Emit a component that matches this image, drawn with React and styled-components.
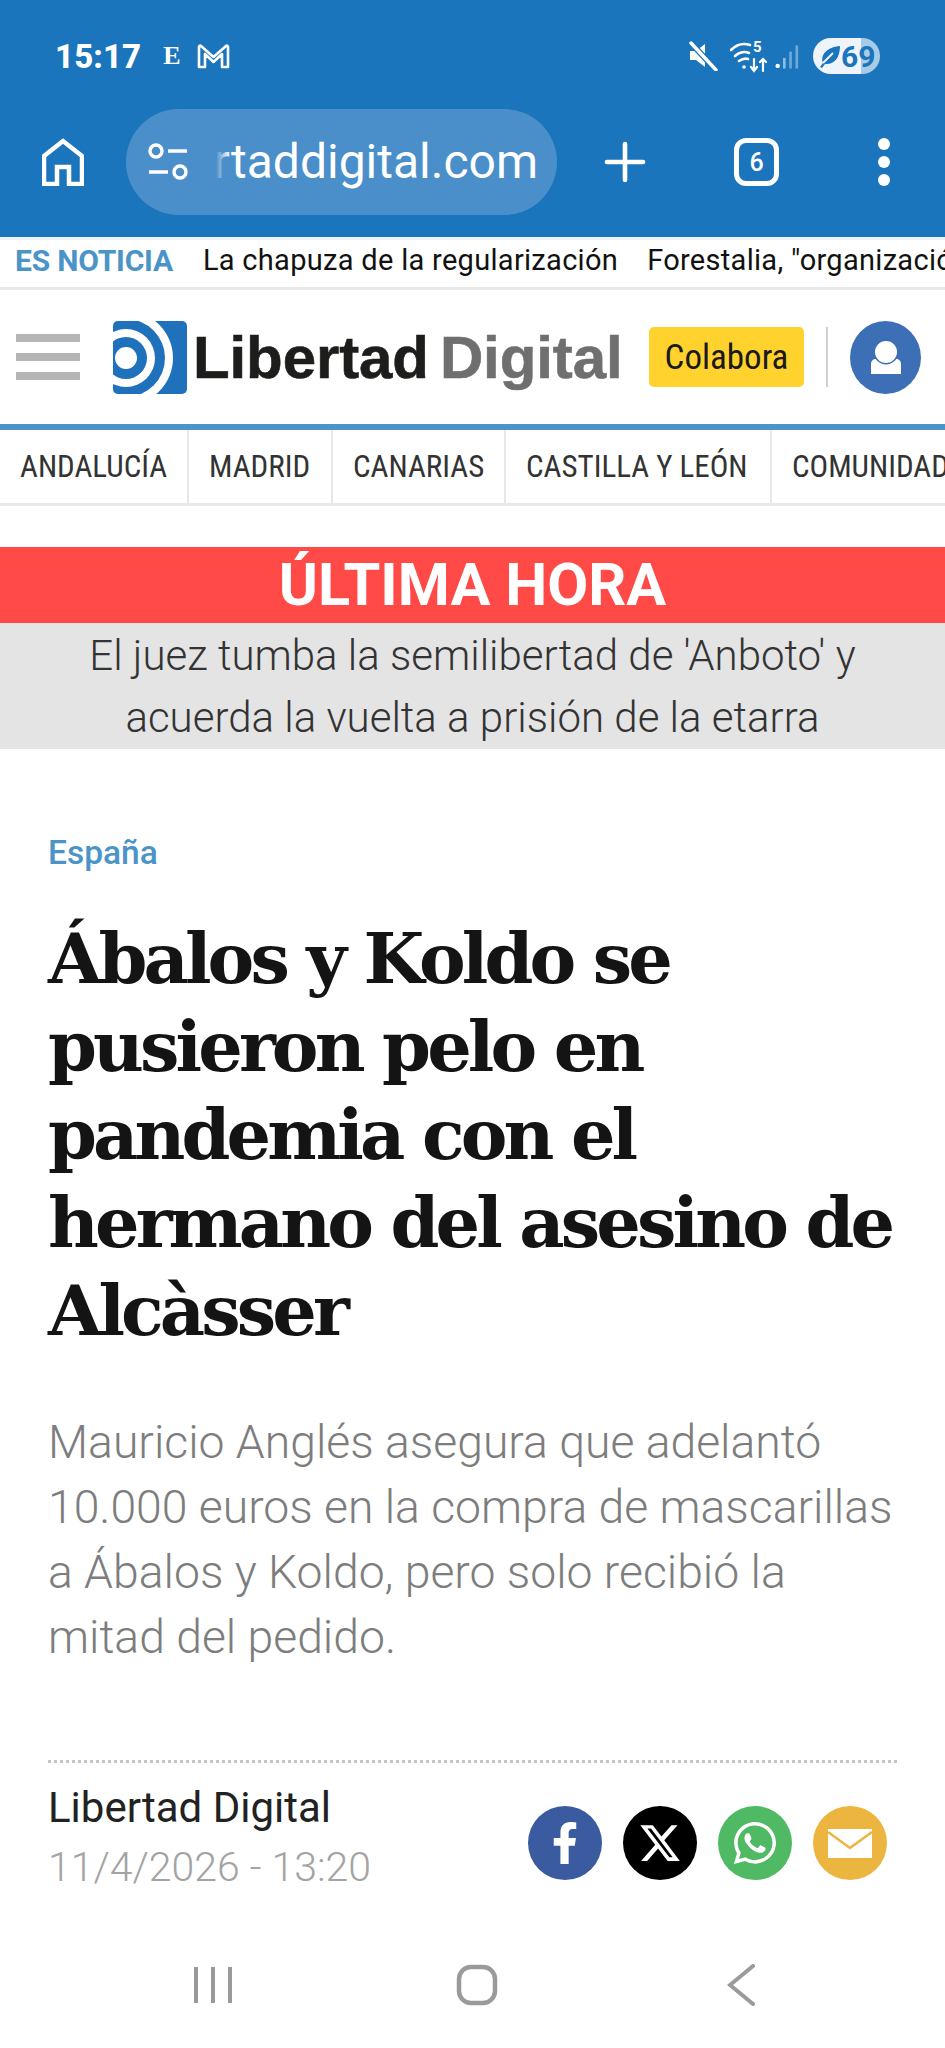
import React from 'react';
import styled, { createGlobalStyle } from 'styled-components';
import { FaFacebookF, FaWhatsapp } from 'react-icons/fa';
import { FaXTwitter } from 'react-icons/fa6';

const GlobalStyle = createGlobalStyle`
  html, body {
    margin: 0;
    padding: 0;
    background: #fff;
  }
  * {
    box-sizing: border-box;
  }
`;

const Page = styled.div`
  width: 945px;
  height: 2048px;
  overflow: hidden;
  display: flex;
  flex-direction: column;
  font-family: Roboto, 'Liberation Sans', sans-serif;
  background: #fff;
`;

const Glyph = styled.svg`
  flex: none;
  margin-left: ${props => props.$ml || 0}px;
  margin-right: ${props => props.$mr || 0}px;
  margin-top: ${props => props.$mt || 0}px;
`;

const Chrome = styled.div`
  height: 237px;
  flex: none;
  background: #1b75bc;
  color: #fff;
  display: flex;
  flex-direction: column;
`;

const StatusBar = styled.div`
  height: 109px;
  padding: 38px 65px 0 55px;
  display: flex;
  justify-content: space-between;
  align-items: flex-start;
`;

const StatusGroup = styled.div`
  display: flex;
  align-items: center;
  height: 36px;
`;

const Clock = styled.span`
  font-size: 33px;
  font-weight: 800;
  letter-spacing: 0.1px;
  margin-right: 22px;
`;

const MailE = styled.span`
  font-family: 'Liberation Serif', serif;
  font-weight: 700;
  font-size: 26px;
  margin-right: 16px;
`;

const Battery = styled.div`
  width: 67px;
  height: 36px;
  border-radius: 18px;
  margin-left: 14px;
  background: linear-gradient(90deg, #eef4fa 0 72%, #a9cbe7 72% 100%);
  color: #1b75bc;
  font-size: 30px;
  font-weight: 700;
  display: flex;
  align-items: center;
  padding-left: 4px;
`;

const ToolBar = styled.div`
  height: 106px;
  padding-left: 42px;
  display: flex;
  align-items: center;
`;

const AddressPill = styled.div`
  width: 431px;
  height: 106px;
  margin-left: 42px;
  margin-right: 47px;
  padding-left: 22px;
  border-radius: 53px;
  background: #4a8fc9;
  display: flex;
  align-items: center;
  flex: none;
`;

const UrlClip = styled.div`
  margin-left: 28px;
  width: 322px;
  overflow: hidden;
  font-size: 48px;
  white-space: nowrap;
  position: relative;
  line-height: 60px;
  display: flex;
  justify-content: flex-end;
`;

const UrlFade = styled.div`
  position: absolute;
  left: 0;
  top: 0;
  bottom: 0;
  width: 14px;
  background: linear-gradient(90deg, #4a8fc9 0%, rgba(74, 143, 201, 0) 100%);
`;

const TabCount = styled.div`
  width: 45px;
  height: 48px;
  margin-left: 88px;
  border: 5px solid #fff;
  border-radius: 12px;
  font-size: 25px;
  font-weight: 500;
  display: flex;
  align-items: center;
  justify-content: center;
  flex: none;
`;

const MenuDots = styled.div`
  margin-left: 99px;
  display: flex;
  flex-direction: column;
  gap: 6px;
`;

const MenuDot = styled.span`
  width: 12px;
  height: 12px;
  border-radius: 50%;
  background: #fff;
`;

const Ticker = styled.div`
  height: 53px;
  flex: none;
  padding: 0 0 7px 15px;
  border-top: 3px solid #eef3f7;
  border-bottom: 3px solid #e8e8e8;
  display: flex;
  align-items: center;
  white-space: nowrap;
  overflow: hidden;
`;

const TickerLabel = styled.span`
  font-size: 30px;
  font-weight: 700;
  letter-spacing: -0.2px;
  color: #4b94c8;
  margin-right: 30px;
`;

const TickerItem = styled.span`
  font-size: 29px;
  color: #111;
  margin-right: 29px;
  letter-spacing: 0.3px;
`;

const Masthead = styled.div`
  height: 134px;
  flex: none;
  padding-left: 16px;
  display: flex;
  align-items: center;
`;

const Burger = styled.div`
  width: 64px;
  display: flex;
  flex-direction: column;
  gap: 11px;
  margin-right: 33px;
`;

const BurgerBar = styled.span`
  height: 8px;
  background: #b5b5b5;
`;

const Wordmark = styled.div`
  margin-left: 6px;
  font-family: 'Liberation Sans', Arial, sans-serif;
  font-size: 60px;
  font-weight: 700;
  letter-spacing: -0.1px;
  -webkit-text-stroke: 0.6px currentColor;
  color: #1d1d1b;
  width: 456px;
  flex: none;
  white-space: nowrap;
`;

const WordmarkGrey = styled.span`
  color: #706f6f;
  margin-left: 11px;
`;

const Colabora = styled.div`
  width: 155px;
  height: 60px;
  border-radius: 5px;
  background: #ffd22e;
  color: #1a1a1a;
  font-size: 35px;
  font-stretch: 87%;
  display: flex;
  align-items: center;
  justify-content: center;
  flex: none;
`;

const Separator = styled.div`
  width: 2px;
  height: 60px;
  margin: 0 22px;
  background: #d0d0d0;
  flex: none;
`;

const Avatar = styled.div`
  width: 71px;
  height: 73px;
  border-radius: 50%;
  background: #3d6fb6;
  display: flex;
  align-items: center;
  justify-content: center;
  flex: none;
`;

const RegionNav = styled.div`
  height: 82px;
  flex: none;
  border-top: 6px solid #4b94c8;
  border-bottom: 3px solid #e8e8e8;
  display: flex;
  overflow: hidden;
  white-space: nowrap;
`;

const RegionLink = styled.div`
  width: ${props => props.$width}px;
  flex: none;
  padding-left: 20px;
  border-right: ${props => (props.$last ? 'none' : '2px solid #e8e8e8')};
  font-size: 31px;
  font-stretch: 87%;
  color: #333;
  display: flex;
  align-items: center;
`;

const Alert = styled.div`
  margin-top: 41px;
  flex: none;
`;

const AlertHead = styled.div`
  height: 76px;
  background: #ff4a47;
  color: #fff;
  font-size: 59.5px;
  font-weight: 700;
  display: flex;
  align-items: center;
  justify-content: center;
`;

const AlertBody = styled.div`
  height: 126px;
  padding-top: 2px;
  background: #e4e4e4;
  color: #333;
  font-size: 42px;
  font-weight: 300;
  line-height: 62px;
  text-align: center;
`;

const Article = styled.div`
  padding: 80px 48px 0;
  flex: none;
`;

const Section = styled.div`
  font-size: 33.5px;
  font-weight: 500;
  line-height: 48px;
  color: #4b94c8;
`;

const Headline = styled.h1`
  margin: 38px 0 0;
  font-family: 'DejaVu Serif', 'Liberation Serif', serif;
  font-size: 70px;
  font-weight: 700;
  line-height: 88px;
  letter-spacing: -3.9px;
  color: #141414;
  white-space: nowrap;
`;

const Summary = styled.p`
  margin: 55px 0 0;
  font-size: 46.3px;
  font-weight: 300;
  line-height: 65px;
  color: #7d7d7d;
  white-space: nowrap;
`;

const MetaRow = styled.div`
  margin-top: 90px;
  border-top: 3px dotted #c4c4c4;
  padding-top: 16px;
  display: flex;
  justify-content: space-between;
  align-items: flex-start;
`;

const Author = styled.div`
  font-size: 42px;
  line-height: 58px;
  color: #222;
`;

const DateText = styled.div`
  font-size: 41px;
  font-weight: 300;
  line-height: 60px;
  color: #a3a3a3;
`;

const ShareList = styled.div`
  display: flex;
  gap: 21px;
  margin: 27px 10px 0 0;
`;

const ShareButton = styled.div`
  width: 74px;
  height: 74px;
  border-radius: 50%;
  background: ${props => props.$bg};
  color: #fff;
  font-size: ${props => props.$size}px;
  display: flex;
  align-items: center;
  justify-content: center;
`;

const SystemNav = styled.div`
  margin-top: auto;
  height: 126px;
  flex: none;
  padding: 0 190px 0 193px;
  display: flex;
  justify-content: space-between;
  align-items: center;
  color: #9a9a9a;
`;

const Logo = () => (
  <Glyph width="74" height="73" viewBox="0 0 74 73">
    <defs>
      <clipPath id="logoClip">
        <rect width="74" height="73" rx="5" />
      </clipPath>
    </defs>
    <g clipPath="url(#logoClip)">
      <rect width="74" height="73" fill="#1f71bb" />
      <circle cx="13" cy="37" r="47" fill="#fff" />
      <circle cx="13" cy="37" r="39" fill="#1f71bb" />
      <circle cx="13" cy="37" r="29" fill="#fff" />
      <circle cx="13" cy="37" r="21" fill="#1f71bb" />
      <circle cx="13" cy="37" r="11" fill="#fff" />
    </g>
  </Glyph>
);

const regions = [
  { name: 'ANDALUCÍA', width: 189 },
  { name: 'MADRID', width: 144 },
  { name: 'CANARIAS', width: 173 },
  { name: 'CASTILLA Y LEÓN', width: 266 },
  { name: 'COMUNIDAD VALENCIANA', width: 300 },
];

const App = () => (
  <Page>
    <GlobalStyle />
    <Chrome>
      <StatusBar>
        <StatusGroup>
          <Clock>15:17</Clock>
          <MailE>E</MailE>
          <Glyph width="33" height="25" viewBox="0 0 33 25" fill="none" stroke="#fff" strokeWidth="2.6" strokeLinejoin="round">
            <path d="M2 23V3c0-1 1-2 2-1l12.5 11L29 2c1-1 2 0 2 1v20h-6V10l-8.5 8L8 10v13z" />
          </Glyph>
        </StatusGroup>
        <StatusGroup>
          <Glyph width="30" height="30" viewBox="0 0 30 30" $mr={12}>
            <path d="M2 10h6l9-7v23l-9-7H2z" fill="#fff" />
            <path d="M3 2l25 27" stroke="#1b75bc" strokeWidth="6" />
            <path d="M3 2l25 27" stroke="#fff" strokeWidth="3.4" strokeLinecap="round" />
          </Glyph>
          <Glyph width="38" height="34" viewBox="0 0 38 34" fill="none" stroke="#fff" strokeWidth="2.6" strokeLinecap="round">
            <path d="M1 11c6-6 13-7 19-5M5 17c4-4 10-5 14-3M9 22c3-2 6-3 9-2" />
            <circle cx="14" cy="28" r="1.8" fill="#fff" stroke="none" />
            <text x="23" y="13" fontSize="15" fontWeight="700" fill="#fff" stroke="none" fontFamily="Roboto, sans-serif">5</text>
            <path d="M24 20v12M21 28l3 4 3-4M33 32V20M30 23l3-3 3 3" strokeWidth="2.2" />
          </Glyph>
          <Glyph width="24" height="26" viewBox="0 0 27 26" $ml={7} $mt={2}>
            <circle cx="3" cy="23" r="2.5" fill="#fff" />
            <rect x="9" y="14" width="3" height="12" fill="#8dbbe0" />
            <rect x="16" y="7" width="3" height="19" fill="#6ea8d8" />
            <rect x="23" y="0" width="3" height="26" fill="#6ea8d8" />
          </Glyph>
          <Battery>
            <Glyph width="24" height="24" viewBox="0 0 24 24" fill="#1b75bc">
              <path d="M3 23l3-4C3 11 10 3 23 2c0 12-6 19-15 18l-3 4z" />
              <path d="M6 19L16 9" stroke="#eef4fa" strokeWidth="2" />
            </Glyph>
            69
          </Battery>
        </StatusGroup>
      </StatusBar>
      <ToolBar>
        <Glyph width="42" height="48" viewBox="0 0 42 48" fill="none" stroke="#fff" strokeWidth="4.5">
          <path d="M2 46V18L21 3l19 15v28H27V29H15v17z" />
        </Glyph>
        <AddressPill>
          <Glyph width="40" height="40" viewBox="0 0 40 40" fill="none" stroke="#fff" strokeWidth="3.4">
            <circle cx="8" cy="9" r="6" />
            <path d="M20 9h19M1 30h19" />
            <circle cx="32" cy="30" r="6" />
          </Glyph>
          <UrlClip>
            <span>libertaddigital.com</span>
            <UrlFade />
          </UrlClip>
        </AddressPill>
        <Glyph width="42" height="42" viewBox="0 0 42 42" stroke="#fff" strokeWidth="4.6" strokeLinecap="round">
          <path d="M21 3v36M3 21h36" />
        </Glyph>
        <TabCount>6</TabCount>
        <MenuDots>
          <MenuDot />
          <MenuDot />
          <MenuDot />
        </MenuDots>
      </ToolBar>
    </Chrome>

    <Ticker>
      <TickerLabel>ES NOTICIA</TickerLabel>
      <TickerItem>La chapuza de la regularización</TickerItem>
      <TickerItem>Forestalia, "organización criminal"</TickerItem>
    </Ticker>

    <Masthead>
      <Burger>
        <BurgerBar />
        <BurgerBar />
        <BurgerBar />
      </Burger>
      <Logo />
      <Wordmark>
        Libertad<WordmarkGrey>Digital</WordmarkGrey>
      </Wordmark>
      <Colabora>Colabora</Colabora>
      <Separator />
      <Avatar>
        <svg width="32" height="34" viewBox="0 0 32 34">
          <path d="M1 34V24c0-3 2-5 5-5h20c3 0 5 2 5 5v10z" fill="#fff" />
          <circle cx="16" cy="12" r="12.5" fill="#3d6fb6" />
          <circle cx="16" cy="12" r="11" fill="#fff" />
        </svg>
      </Avatar>
    </Masthead>

    <RegionNav>
      {regions.map((region, i) => (
        <RegionLink key={region.name} $width={region.width} $last={i === regions.length - 1}>
          {region.name}
        </RegionLink>
      ))}
    </RegionNav>

    <Alert>
      <AlertHead>ÚLTIMA HORA</AlertHead>
      <AlertBody>
        El juez tumba la semilibertad de 'Anboto' y
        <br />
        acuerda la vuelta a prisión de la etarra
      </AlertBody>
    </Alert>

    <Article>
      <Section>España</Section>
      <Headline>
        Ábalos y Koldo se
        <br />
        pusieron pelo en
        <br />
        pandemia con el
        <br />
        hermano del asesino de
        <br />
        Alcàsser
      </Headline>
      <Summary>
        Mauricio Anglés asegura que adelantó
        <br />
        10.000 euros en la compra de mascarillas
        <br />
        a Ábalos y Koldo, pero solo recibió la
        <br />
        mitad del pedido.
      </Summary>
      <MetaRow>
        <div>
          <Author>Libertad Digital</Author>
          <DateText>11/4/2026 - 13:20</DateText>
        </div>
        <ShareList>
          <ShareButton $bg="#3b5ba0" $size={42}>
            <FaFacebookF />
          </ShareButton>
          <ShareButton $bg="#000" $size={44}>
            <FaXTwitter />
          </ShareButton>
          <ShareButton $bg="#4fb964" $size={48}>
            <FaWhatsapp />
          </ShareButton>
          <ShareButton $bg="#ebb540">
            <svg width="44" height="29" viewBox="0 0 44 29">
              <rect width="44" height="29" fill="#fff" />
              <path d="M0 3l22 16L44 3" fill="none" stroke="#ebb540" strokeWidth="2.5" />
            </svg>
          </ShareButton>
        </ShareList>
      </MetaRow>
    </Article>

    <SystemNav>
      <svg width="40" height="36" viewBox="0 0 40 36" stroke="currentColor" strokeWidth="4">
        <path d="M3 0v36M20 0v36M37 0v36" />
      </svg>
      <Glyph width="42" height="42" viewBox="0 0 42 42" fill="none" stroke="currentColor" strokeWidth="4.5" $mr={7}>
        <rect x="3" y="3" width="36" height="36" rx="12" />
      </Glyph>
      <svg width="28" height="42" viewBox="0 0 28 42" fill="none" stroke="currentColor" strokeWidth="4" strokeLinecap="round">
        <path d="M26 2L3 21l23 19" />
      </svg>
    </SystemNav>
  </Page>
);

export default App;
